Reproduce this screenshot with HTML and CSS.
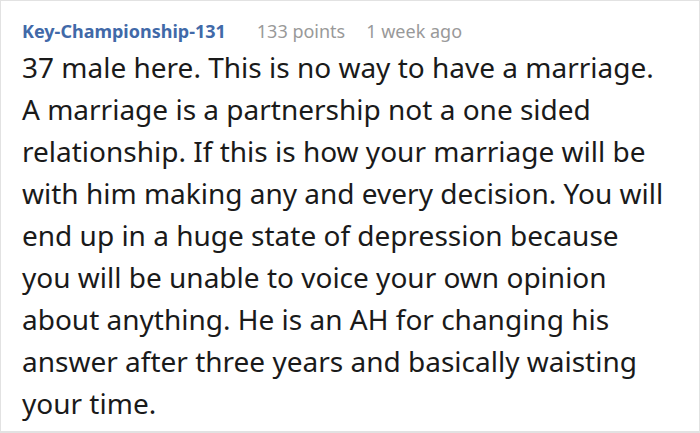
FILE: index.html
```html
<!DOCTYPE html>
<html>
<head>
<meta charset="utf-8">
<link rel="stylesheet" href="styles.css">
</head>
<body>
<div class="comment">
  <div class="meta">
    <span class="author">Key-Championship-131</span>
    <span class="points">133 points</span>
    <span class="time">1 week ago</span>
  </div>
  <p class="text">37 male here. This is no way to have a marriage. A marriage is a partnership not a one sided relationship. If this is how your marriage will be with him making any and every decision. You will end up in a huge state of depression because you will be unable to voice your own opinion about anything. He is an AH for changing his answer after three years and basically waisting your time.</p>
</div>
</body>
</html>
```

FILE: styles.css
```css
html, body {
  margin: 0;
  padding: 0;
  background: #fff;
}
.comment {
  box-sizing: border-box;
  width: 700px;
  height: 433px;
  border: 1px solid #e2e2e2;
  border-bottom-width: 2px;
  padding: 17px 31px 0 21px;
  font-family: "Noto Sans", sans-serif;
}
.meta {
  display: flex;
  font-size: 18px;
  line-height: 26px;
}
.author {
  color: #4169a8;
  font-weight: 700;
  margin-right: 31px;
}
.points, .time {
  color: #999;
}
.points {
  margin-right: 21px;
}
.text {
  margin: 2px 0 0;
  font-size: 28px;
  line-height: 42px;
  color: #1a1a1a;
}
```
